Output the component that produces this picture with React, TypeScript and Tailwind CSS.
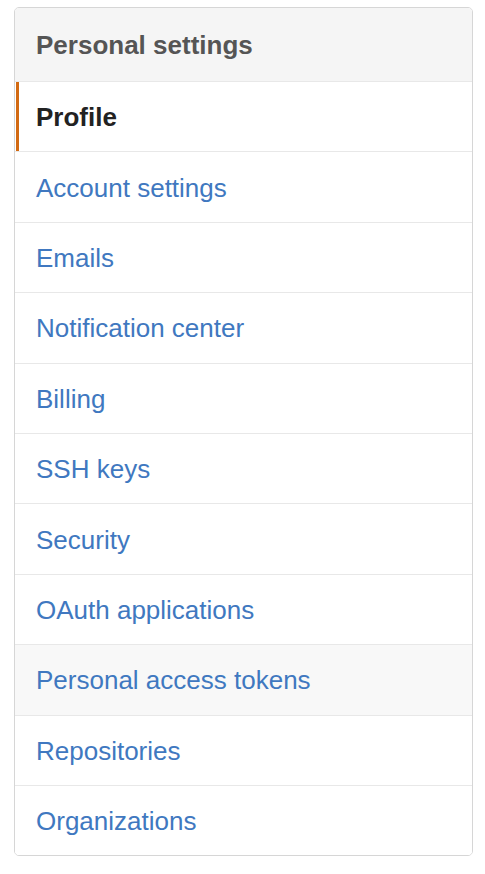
import React from 'react';

const items = [
  'Profile',
  'Account settings',
  'Emails',
  'Notification center',
  'Billing',
  'SSH keys',
  'Security',
  'OAuth applications',
  'Personal access tokens',
  'Repositories',
  'Organizations',
];

export default function App() {
  const selected = 'Profile';
  const hovered = 'Personal access tokens';

  return (
    <div className="min-h-screen bg-white pt-[7px] pl-[14px]" style={{ fontFamily: '"Liberation Sans", Arial, Helvetica, sans-serif' }}>
      <nav className="w-[459px] border border-[#d6d6d6] rounded-[5px] overflow-hidden">
        <div className="h-[73px] flex items-center pl-[21px] pt-[2px] bg-[#f5f5f5] text-[#555] font-bold text-[26px]">
          Personal settings
        </div>
        {items.map((item) => {
          const isSelected = item === selected;
          return (
            <a
              key={item}
              href="#"
              className={`relative box-border h-[70.4px] flex items-center pl-[21px] pt-[2px] border-t border-[#e8e8e8] text-[26px] ${
                isSelected ? 'font-bold text-[#222]' : 'text-[#4078c0]'
              } ${item === hovered ? 'bg-[#f8f8f8]' : 'bg-white'}`}
            >
              {isSelected && <span className="absolute left-[1px] top-0 bottom-0 w-[3px] bg-[#d26911]" />}
              {item}
            </a>
          );
        })}
      </nav>
    </div>
  );
}
